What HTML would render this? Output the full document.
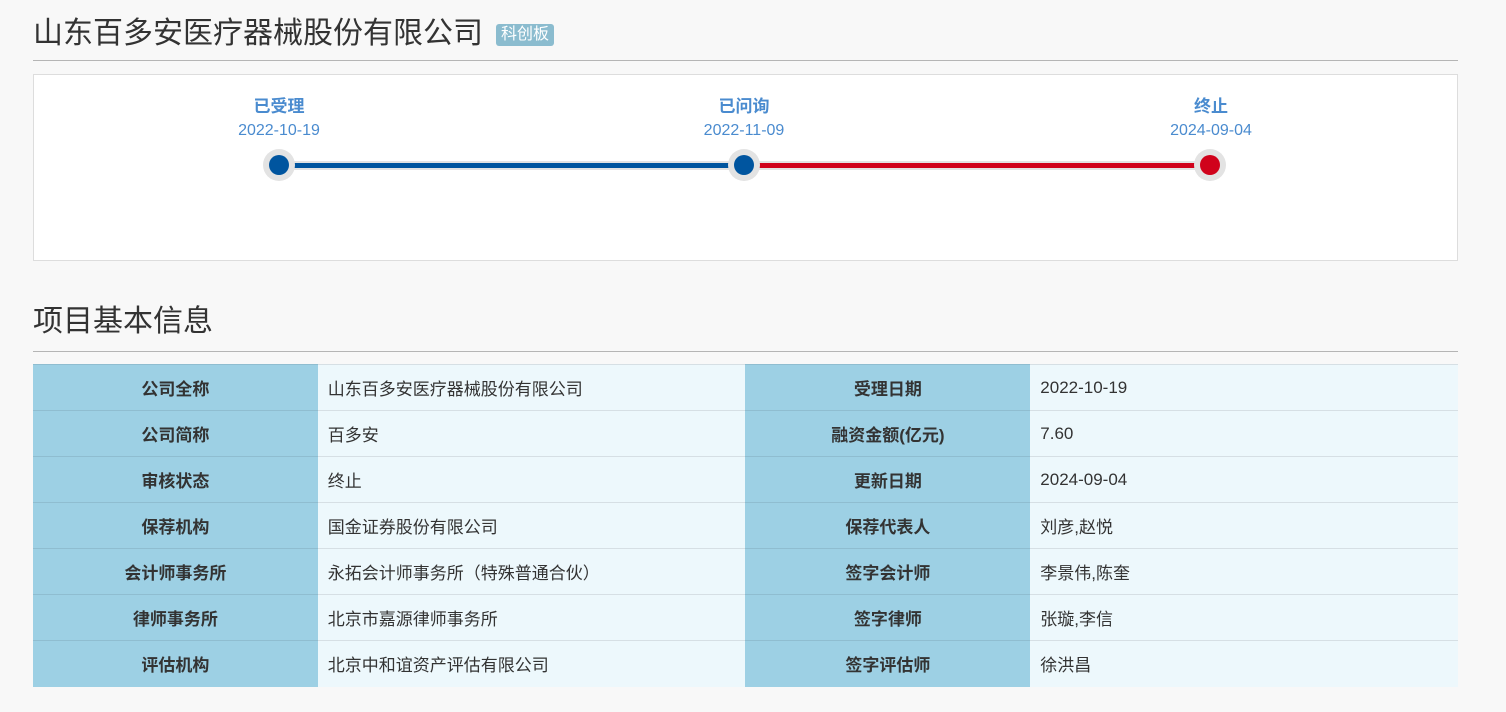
<!DOCTYPE html>
<html><head><meta charset="utf-8"><style>
*{margin:0;padding:0;box-sizing:border-box}
body{width:1506px;height:712px;background:#f8f8f8;font-family:"Liberation Sans","Noto Sans CJK SC",sans-serif;color:#333;position:relative;overflow:hidden}
.h1{position:absolute;left:33px;top:14px;font-size:30px;line-height:40px;color:#333}
.tag{display:inline-block;background:#8bbccf;color:#fff;font-size:16px;line-height:22px;padding:0 5px;border-radius:3px;vertical-align:4px;margin-left:13px}
.hr{position:absolute;left:33px;width:1425px;height:1px;background:#b5b5b5}
.box{position:absolute;left:33px;top:74px;width:1425px;height:187px;background:#fff;border:1px solid #ddd}
.st{position:absolute;width:160px;text-align:center;color:#4a8bcf}
.st b{display:block;font-size:17px;line-height:22px}
.st span{display:block;font-size:16px;line-height:26px}
.line{position:absolute;height:9px;top:161px;background:#e3e3e3}
.line i{position:absolute;left:0;right:0;top:2px;height:5px}
.dot{position:absolute;width:32px;height:32px;border-radius:50%;background:#e3e3e3;top:149px}
.dot i{position:absolute;left:6px;top:6px;width:20px;height:20px;border-radius:50%}
.h2{position:absolute;left:33px;top:302px;font-size:30px;line-height:40px}
table{position:absolute;left:33px;top:364px;border-collapse:collapse;width:1425px;font-size:17px}
td{height:46px;border-top:1px solid #d6dfe4;padding:0 10px}
td.l{background:#9dd0e4;text-align:center;font-weight:bold;width:285px;border-top-color:#8fbdd0}
td.v{background:#edf8fc;width:428px}
</style></head><body>
<div class="h1">山东百多安医疗器械股份有限公司<span class="tag">科创板</span></div>
<div class="hr" style="top:60px"></div>
<div class="box"></div>
<div class="st" style="left:199px;top:96px"><b>已受理</b><span>2022-10-19</span></div>
<div class="st" style="left:664px;top:96px"><b>已问询</b><span>2022-11-09</span></div>
<div class="st" style="left:1131px;top:96px"><b>终止</b><span>2024-09-04</span></div>
<div class="line" style="left:279px;width:466px"><i style="background:#00559f"></i></div>
<div class="line" style="left:744px;width:466px"><i style="background:#d0021b"></i></div>
<div class="dot" style="left:263px"><i style="background:#00559f"></i></div>
<div class="dot" style="left:728px"><i style="background:#00559f"></i></div>
<div class="dot" style="left:1194px"><i style="background:#d0021b"></i></div>
<div class="h2">项目基本信息</div>
<div class="hr" style="top:351px"></div>
<table>
<tr><td class="l">公司全称</td><td class="v">山东百多安医疗器械股份有限公司</td><td class="l">受理日期</td><td class="v">2022-10-19</td></tr>
<tr><td class="l">公司简称</td><td class="v">百多安</td><td class="l">融资金额(亿元)</td><td class="v">7.60</td></tr>
<tr><td class="l">审核状态</td><td class="v">终止</td><td class="l">更新日期</td><td class="v">2024-09-04</td></tr>
<tr><td class="l">保荐机构</td><td class="v">国金证券股份有限公司</td><td class="l">保荐代表人</td><td class="v">刘彦,赵悦</td></tr>
<tr><td class="l">会计师事务所</td><td class="v">永拓会计师事务所（特殊普通合伙）</td><td class="l">签字会计师</td><td class="v">李景伟,陈奎</td></tr>
<tr><td class="l">律师事务所</td><td class="v">北京市嘉源律师事务所</td><td class="l">签字律师</td><td class="v">张璇,李信</td></tr>
<tr><td class="l">评估机构</td><td class="v">北京中和谊资产评估有限公司</td><td class="l">签字评估师</td><td class="v">徐洪昌</td></tr>
</table>
</body></html>
